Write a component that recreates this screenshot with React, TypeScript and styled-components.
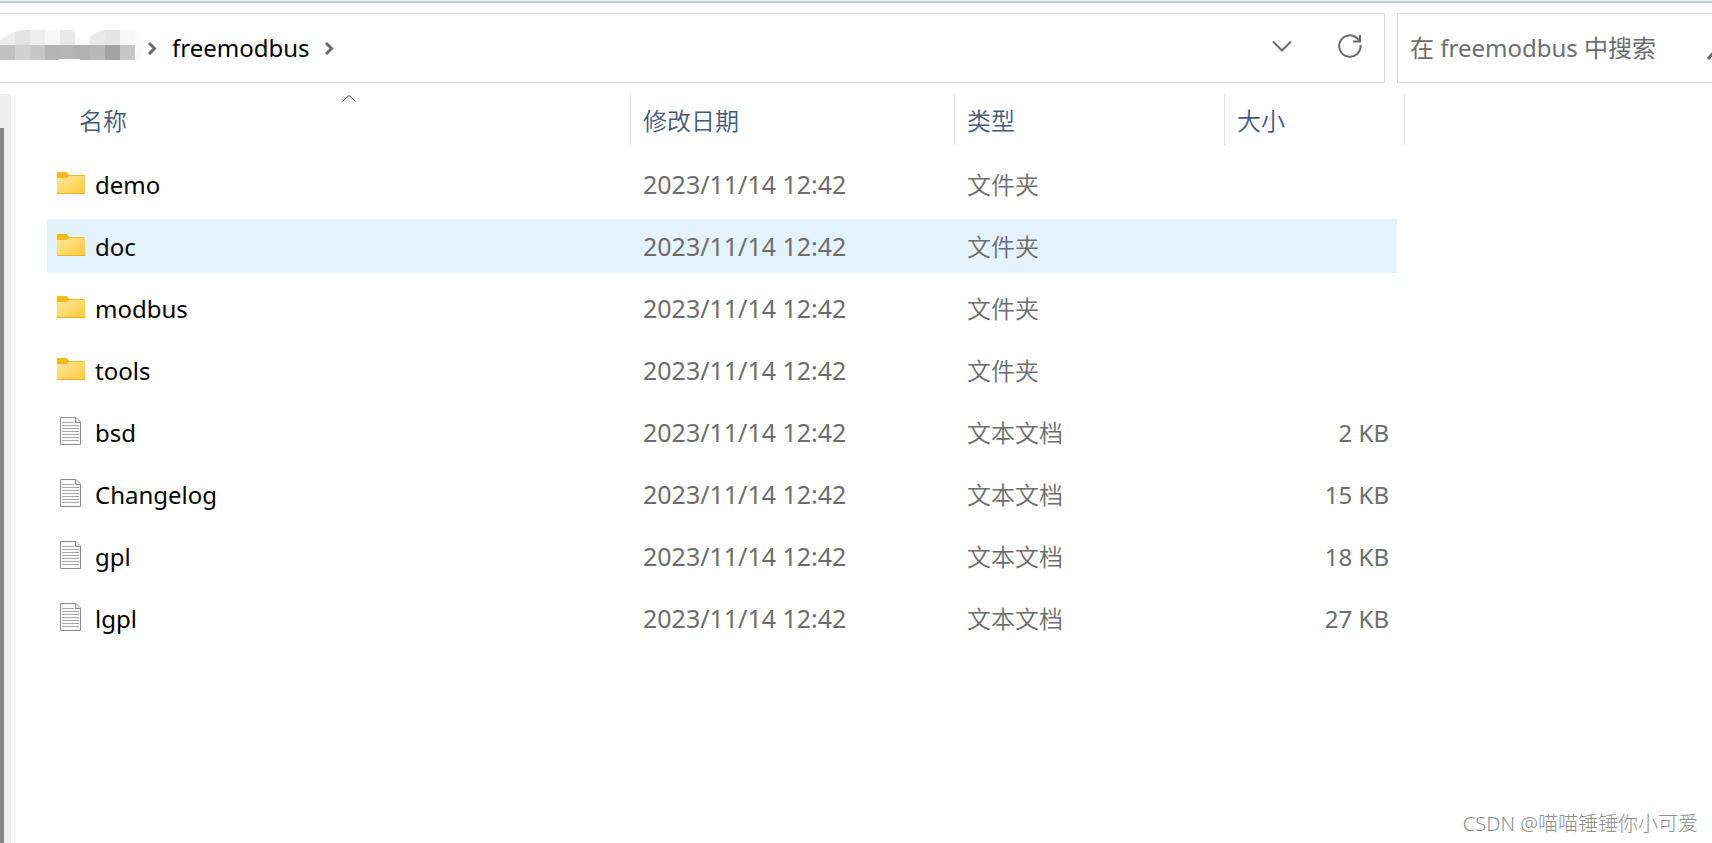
import React from "react";
import styled, { createGlobalStyle } from "styled-components";

const GlobalStyle = createGlobalStyle`
  *, *::before, *::after { box-sizing: border-box; }
  html, body, #root { height: 100%; }
  body {
    margin: 0;
    overflow: hidden;
    background: #fff;
    color: #000;
    font-family: "Noto Sans", "Noto Sans CJK SC", sans-serif;
    font-size: 24px;
    line-height: 32px;
  }
`;

const Window = styled.div`
  position: relative;
  display: flex;
  flex-direction: column;
  height: 100%;
`;

const TopEdge = styled.div`
  height: 3px;
  flex: none;
  background: #bcd0d3;
  border-top: 1px solid #e9f0f1;
`;

const Toolbar = styled.header`
  display: flex;
  gap: 12px;
  flex: none;
  height: 70px;
  margin-top: 10px;
`;

const AddressBar = styled.nav`
  flex: 1;
  display: flex;
  align-items: center;
  min-width: 0;
  border: 1px solid #d9d9d9;
  border-left: 0;
`;

const Crumb = styled.a`
  color: #000;
  text-decoration: none;
  margin: 0 15px;
`;

const IconButton = styled.button`
  display: flex;
  align-items: center;
  justify-content: center;
  width: 68px;
  height: 100%;
  padding: 0 0 4px;
  border: 0;
  background: none;
`;

const Spacer = styled.div`
  flex: 1;
`;

const SearchBox = styled.label`
  display: flex;
  align-items: center;
  flex: none;
  width: 315px;
  overflow: hidden;
  border: 1px solid #d9d9d9;
  border-right: 0;
  padding-left: 12px;
`;

const SearchInput = styled.input`
  flex: none;
  width: 294px;
  padding: 0;
  border: 0;
  outline: 0;
  background: none;
  font: inherit;
  &::placeholder { color: #6d6d6d; opacity: 1; }
`;

const SearchGlyph = styled.svg`
  flex: none;
`;

const Main = styled.main`
  flex: 1;
  display: flex;
  min-height: 0;
  margin-top: 11px;
`;

const ScrollTrack = styled.div`
  flex: none;
  width: 11px;
  padding-top: 34px;
  background: #eee;
`;

const ScrollThumb = styled.div`
  width: 4px;
  height: 100%;
  background: #888684;
`;

const PaneEdge = styled.div`
  flex: none;
  width: 2px;
  margin: 0 31px 0 3px;
  background: #f7f7f7;
`;

const FileTable = styled.table`
  table-layout: fixed;
  width: 1358px;
  flex: none;
  align-self: flex-start;
  margin-top: -8px;
  border-collapse: separate;
  border-spacing: 0 8px;
`;

const Column = styled.col<{ $width: number }>`
  width: ${(p) => p.$width}px;
`;

const HeadCell = styled.th<{ $indent?: boolean }>`
  height: 55px;
  padding: 0 0 4px ${(p) => (p.$indent ? 20 : 0)}px;
  font-weight: 400;
`;

const HeadButton = styled.button`
  position: relative;
  display: block;
  width: 100%;
  height: 51px;
  padding: 2px 0 0 12px;
  border: 0;
  border-right: 1px solid #e2e2e2;
  background: none;
  color: #44597b;
  font: inherit;
  font-weight: 350;
  text-align: left;
`;

const SortMark = styled.svg`
  position: absolute;
  top: 0;
  left: 50%;
  margin-left: -7px;
`;

const Row = styled.tr<{ $hover?: boolean }>`
  & > td { background: ${(p) => (p.$hover ? "#e4f2fe" : "transparent")}; }
  & > td:last-child { background: none; }
`;

const Cell = styled.td<{ $right?: boolean }>`
  height: 54px;
  padding: 2px 8px 0 12px;
  color: #6d6d6d;
  text-align: ${(p) => (p.$right ? "right" : "left")};
`;

const DateCell = styled(Cell)`
  padding-top: 0;
  font-size: 25px;
`;

const TypeCell = styled(Cell)`
  font-weight: 350;
`;

const NameCell = styled(Cell)`
  padding-left: 10px;
  color: #000;
  border-radius: 2px 0 0 2px;
`;

const Name = styled.span`
  display: flex;
  align-items: center;
  gap: 10px;
  & > svg { margin-bottom: 4px; }
`;

const Watermark = styled.footer`
  position: absolute;
  right: 14px;
  bottom: 3px;
  color: #8f8f8f;
  font-size: 20px;
  font-weight: 300;
`;

const MosaicArt = styled.svg`
  flex: none;
  margin-bottom: 6px;
`;

const topShades = ["#ececec", "#e3e3e3", "#ededed", "#f6f6f6", "#e8e8e8", "#f9f9f9", "#e9e9e9", "#e4e4e4", "#f9f9f9"];
const lowShades = ["#c1c1c1", "#d1d1d1", "#c6c6c6", "#b4b4b4", "#b6b6b6", "#b1b1b1", "#b8b8b8", "#a3a3a3", "#c6c6c6"];

const Mosaic = () => (
  <MosaicArt width="148" height="30" viewBox="0 0 148 30" shapeRendering="crispEdges" aria-hidden="true">
    <clipPath id="blob">
      <path d="M0 11Q10 1 24 0H70Q76 2 78 8Q83 12 88 9Q94 3 102 0H135Q143 6 145 15Q143 27 138 30H80V29H59V30H0Z" />
    </clipPath>
    <g clipPath="url(#blob)">
      {topShades.map((c, i) => <rect key={i} x={i * 15} y="0" width="15" height="15" fill={c} />)}
      {lowShades.map((c, i) => <rect key={i} x={i * 15} y="15" width="15" height="15" fill={c} />)}
      <rect x="135" y="0" width="10" height="30" fill="#fbfbfb" />
    </g>
  </MosaicArt>
);

const CrumbChevron = () => (
  <svg width="9" height="14" viewBox="0 0 9 14" fill="none" stroke="#6a6a6a" strokeWidth="3" aria-hidden="true">
    <path d="M1 2L6.500 7.500L1 13" />
  </svg>
);

const FolderIcon = () => (
  <svg width="28" height="22" viewBox="0 0 28 22" aria-hidden="true">
    <defs>
      <linearGradient id="folder" x1="0" y1="0" x2="1" y2="1">
        <stop offset="0" stopColor="#ffe8a0" />
        <stop offset="1" stopColor="#ffc936" />
      </linearGradient>
    </defs>
    <path d="M0 1Q0 0 1 0H9.500L12.500 3H27Q28 3 28 4V8H0Z" fill="#fbb917" />
    <path d="M0 6H9.500L12.500 4H28V21Q28 22 27 22H1Q0 22 0 21Z" fill="url(#folder)" />
    <path d="M0 21.500H28" stroke="#eeb02c" />
  </svg>
);

const DocIcon = () => (
  <svg width="28" height="28" viewBox="0 0 28 28" fill="none" aria-hidden="true">
    <path d="M3.500 .5H19L23.500 5V27.500H3.500Z" fill="#f9f9f9" stroke="#8c8c8c" />
    <path d="M18.500 .5V5.500H23.500" fill="#e6e6e6" stroke="#8c8c8c" />
    <path d="M5 5.500H17M5 8.500H22M5 11.500H22M5 14.500H22M5 17.500H22M5 20.500H22M5 23.500H22" stroke="#a9abad" />
  </svg>
);

const DATE = "2023/11/14 12:42";
const files = [
  { name: "demo", folder: true },
  { name: "doc", folder: true, hover: true },
  { name: "modbus", folder: true },
  { name: "tools", folder: true },
  { name: "bsd", size: "2 KB" },
  { name: "Changelog", size: "15 KB" },
  { name: "gpl", size: "18 KB" },
  { name: "lgpl", size: "27 KB" },
];

export default function App() {
  return (
    <Window>
      <GlobalStyle />
      <TopEdge />
      <Toolbar>
        <AddressBar>
          <Mosaic />
          <CrumbChevron />
          <Crumb href="#freemodbus">freemodbus</Crumb>
          <CrumbChevron />
          <Spacer />
          <IconButton aria-label="展开">
            <svg width="20" height="12" viewBox="0 0 20 12" fill="none" stroke="#6a6a6a" strokeWidth="2">
              <path d="M1 1.500L10 10.500L19 1.500" />
            </svg>
          </IconButton>
          <IconButton aria-label="刷新">
            <svg width="24" height="24" viewBox="0 0 24 24" fill="none" stroke="#6a6a6a" strokeWidth="2">
              <path d="M22.500 11A10.700 10.700 0 1 1 19.500 4.600L22 7M22 1V7.500H15" />
            </svg>
          </IconButton>
        </AddressBar>
        <SearchBox>
          <SearchInput type="text" aria-label="搜索" placeholder="在 freemodbus 中搜索" />
          <SearchGlyph width="28" height="28" viewBox="0 0 28 28" fill="none" stroke="#6a6a6a" strokeWidth="3" aria-hidden="true">
            <path d="M4 25L12 16" />
            <circle cx="18" cy="10" r="8" />
          </SearchGlyph>
        </SearchBox>
      </Toolbar>
      <Main>
        <ScrollTrack><ScrollThumb /></ScrollTrack>
        <PaneEdge />
        <FileTable>
          <colgroup>
            <Column $width={584} />
            <Column $width={324} />
            <Column $width={270} />
            <Column $width={172} />
            <Column $width={8} />
          </colgroup>
          <thead>
            <tr>
              <HeadCell $indent scope="col">
                <HeadButton>
                  名称
                  <SortMark width="14" height="8" viewBox="0 0 14 8" fill="none" stroke="#444" aria-hidden="true">
                    <path d="M.5 7.500L7 1.500L13.500 7.500" />
                  </SortMark>
                </HeadButton>
              </HeadCell>
              <HeadCell scope="col"><HeadButton>修改日期</HeadButton></HeadCell>
              <HeadCell scope="col"><HeadButton>类型</HeadButton></HeadCell>
              <HeadCell scope="col" colSpan={2}><HeadButton>大小</HeadButton></HeadCell>
            </tr>
          </thead>
          <tbody>
            {files.map((f) => (
              <Row key={f.name} $hover={f.hover}>
                <NameCell>
                  <Name>
                    {f.folder ? <FolderIcon /> : <DocIcon />}
                    {f.name}
                  </Name>
                </NameCell>
                <DateCell>{DATE}</DateCell>
                <TypeCell>{f.folder ? "文件夹" : "文本文档"}</TypeCell>
                <Cell $right>{f.size}</Cell>
                <td />
              </Row>
            ))}
          </tbody>
        </FileTable>
      </Main>
      <Watermark>CSDN @喵喵锤锤你小可爱</Watermark>
    </Window>
  );
}
